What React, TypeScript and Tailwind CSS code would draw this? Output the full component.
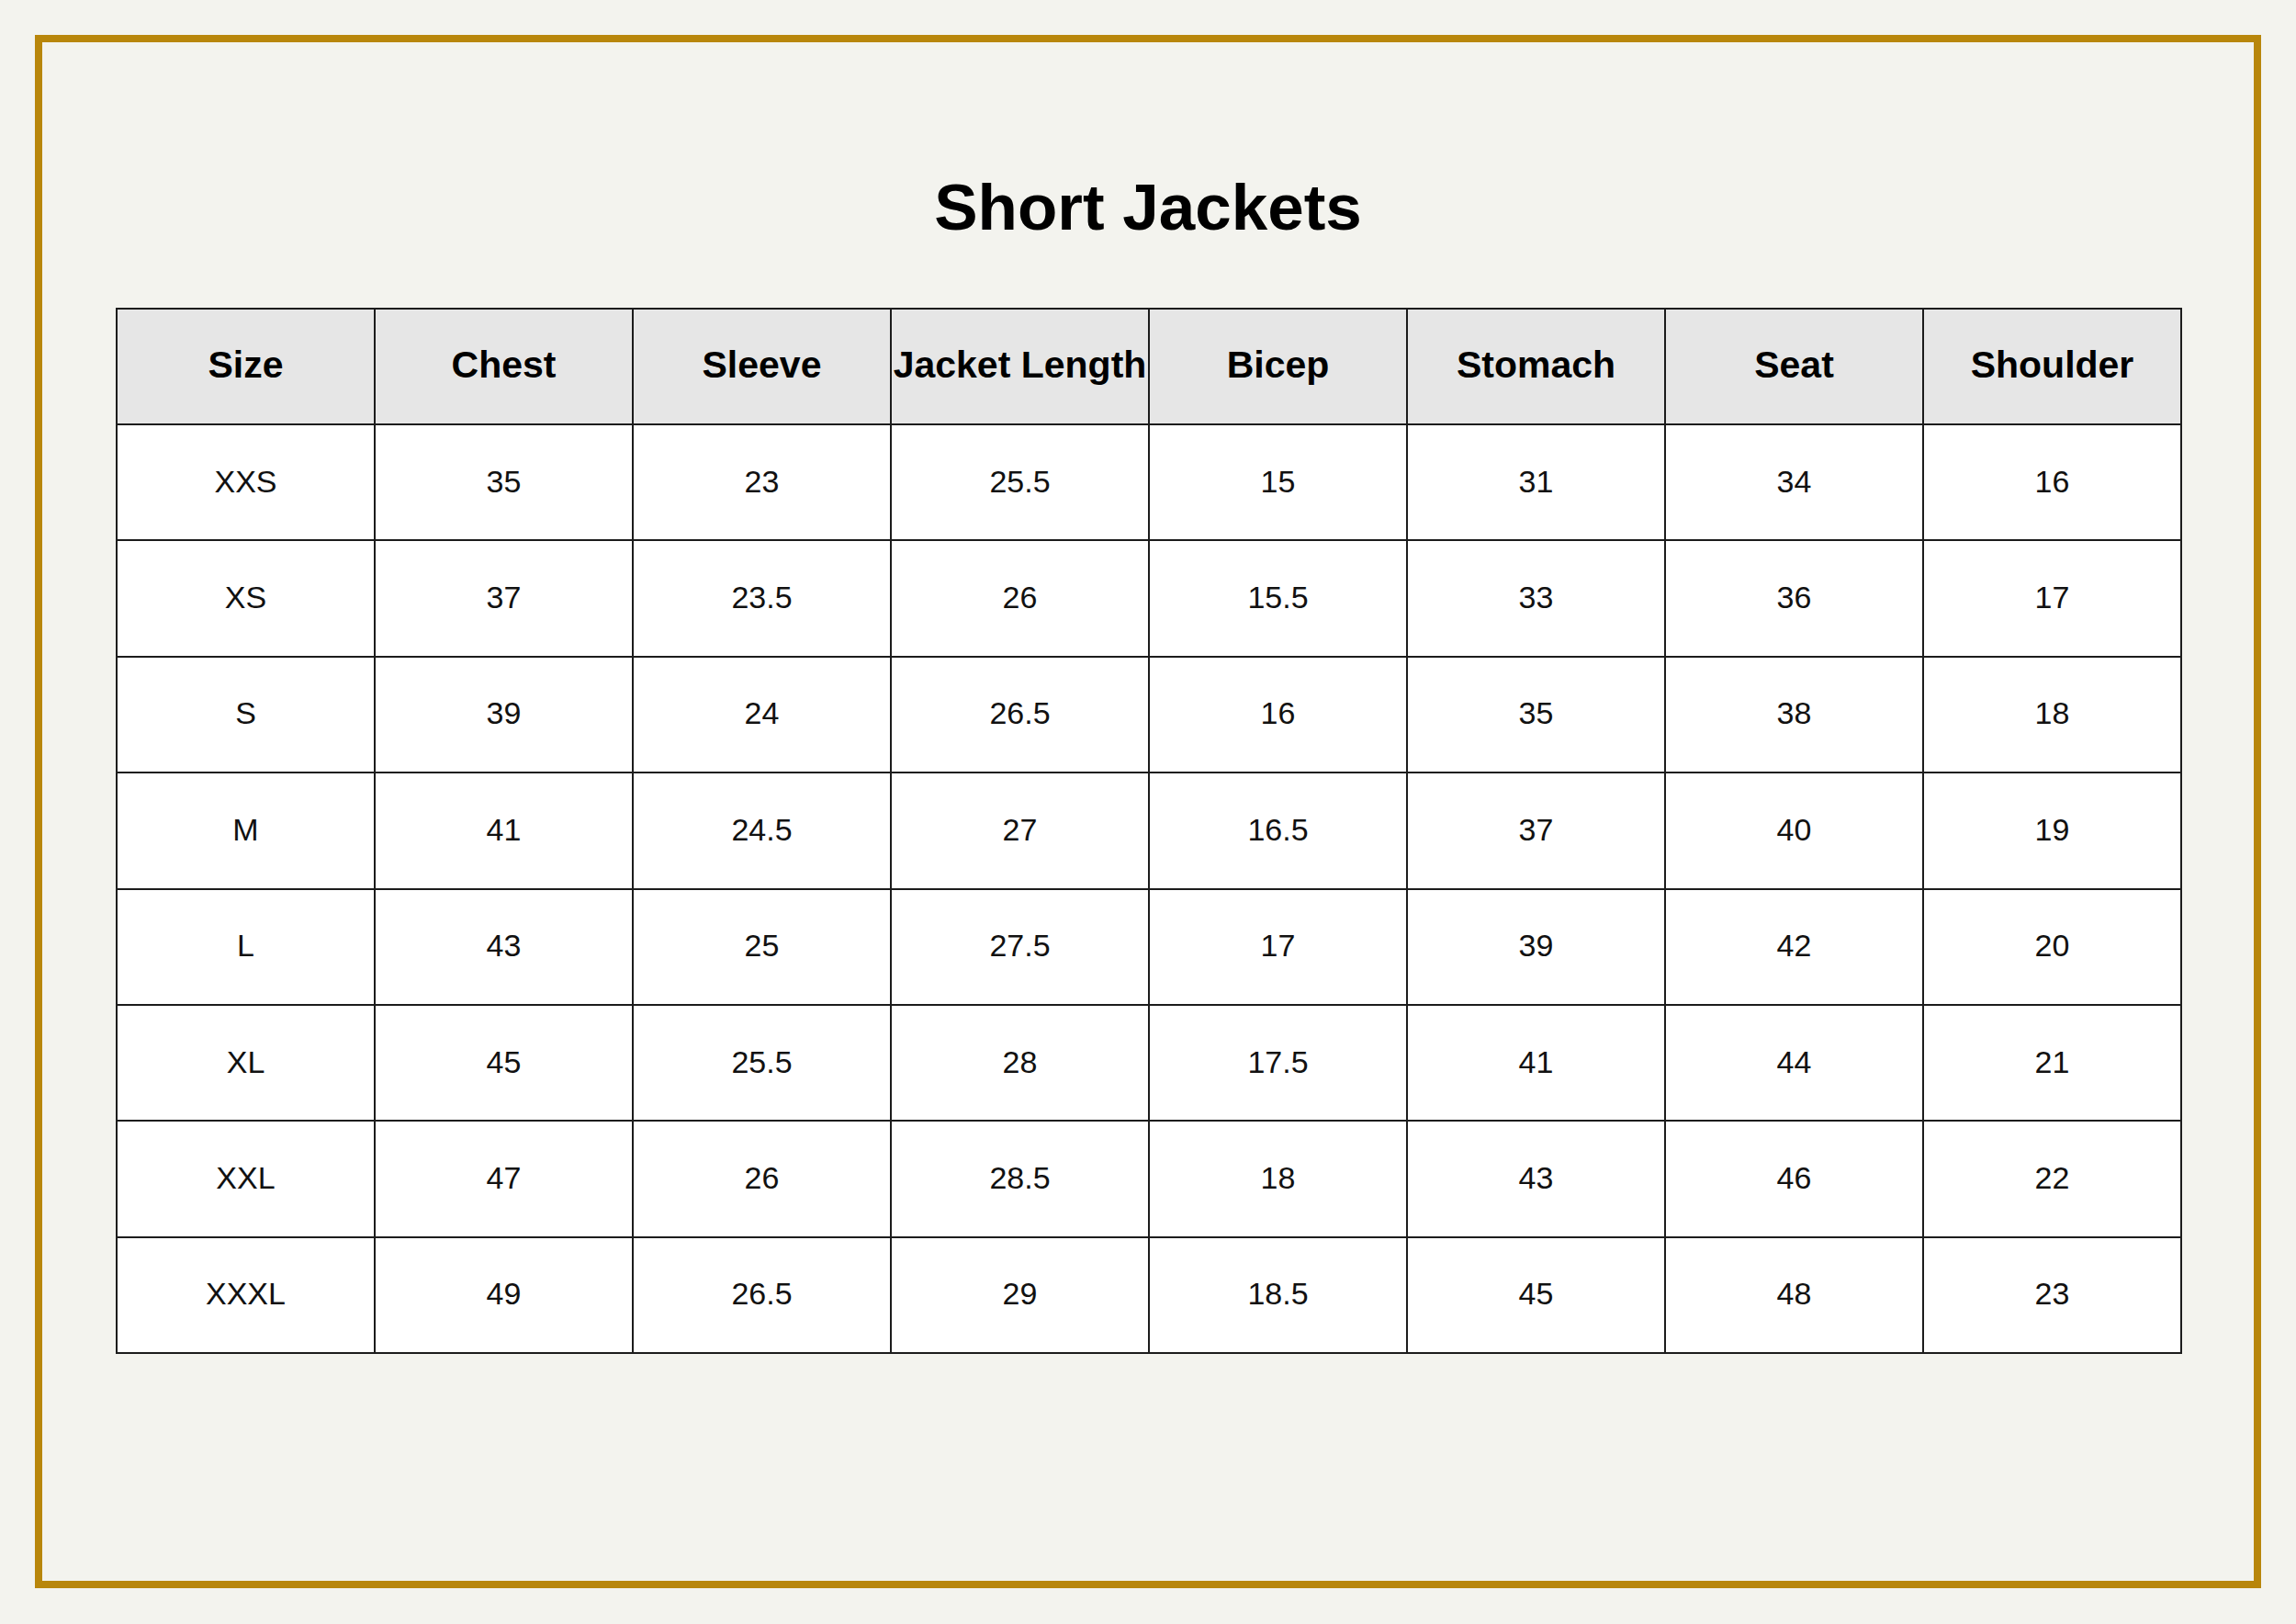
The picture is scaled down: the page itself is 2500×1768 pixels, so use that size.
const headers = ["Size", "Chest", "Sleeve", "Jacket Length", "Bicep", "Stomach", "Seat", "Shoulder"];

const rows = [
  ["XXS", "35", "23", "25.5", "15", "31", "34", "16"],
  ["XS", "37", "23.5", "26", "15.5", "33", "36", "17"],
  ["S", "39", "24", "26.5", "16", "35", "38", "18"],
  ["M", "41", "24.5", "27", "16.5", "37", "40", "19"],
  ["L", "43", "25", "27.5", "17", "39", "42", "20"],
  ["XL", "45", "25.5", "28", "17.5", "41", "44", "21"],
  ["XXL", "47", "26", "28.5", "18", "43", "46", "22"],
  ["XXXL", "49", "26.5", "29", "18.5", "45", "48", "23"],
];

export default function App() {
  return (
    <div
      className="min-h-[1768px] w-[2500px] bg-[#f3f3ee] p-[38px] text-black"
      style={{ fontFamily: '"Liberation Sans", Arial, sans-serif' }}
    >
      <div className="h-[1691px] border-8 border-[#b8860b] px-[80px] pt-[144px]">
        {/* Title */}
        <h1 className="text-center text-[71px] font-bold leading-none">Short Jackets</h1>

        {/* Size table */}
        <table className="mt-[74px] w-[2248px] table-fixed border-collapse bg-white">
          <thead>
            <tr className="h-[126px] bg-[#e6e6e6]">
              {headers.map((h) => (
                <th
                  key={h}
                  className="w-[281px] border-2 border-[#1c1c1c] p-0 pb-[2px] text-center text-[41px] font-bold whitespace-nowrap"
                >
                  {h}
                </th>
              ))}
            </tr>
          </thead>
          <tbody>
            {rows.map((r) => (
              <tr key={r[0]} className="h-[126.4px]">
                {r.map((v, i) => (
                  <td key={i} className="border-2 border-[#1c1c1c] p-0 pb-[2px] text-center text-[34px] text-[#111]">
                    {v}
                  </td>
                ))}
              </tr>
            ))}
          </tbody>
        </table>
      </div>
    </div>
  );
}
